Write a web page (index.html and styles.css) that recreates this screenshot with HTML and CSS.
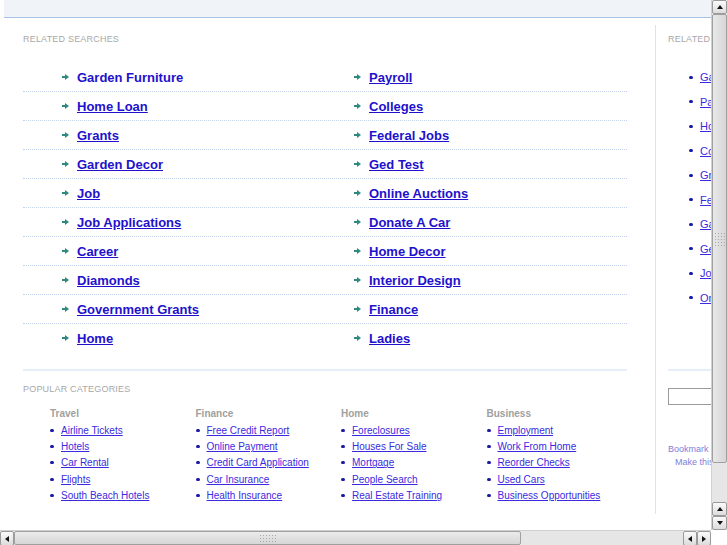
FILE: index.html
```html
<!DOCTYPE html>
<html lang="en">
<head>
    <meta charset="UTF-8">
    <title>Related Searches</title>
    <link rel="stylesheet" href="styles.css">
</head>
<body>
    <div class="window">
        <div class="viewport">
            <div class="page">
                <div class="topbar"></div>
                <div class="wrap">
                    <!-- Main column -->
                    <div class="main">
                        <h2 class="label">Related Searches</h2>
                        <div class="searches">
                            <div class="row">
                                <a class="first" href="#"><span class="arrow"></span>Garden Furniture</a>
                                <a href="#"><span class="arrow"></span>Payroll</a>
                            </div>
                            <div class="row">
                                <a href="#"><span class="arrow"></span>Home Loan</a>
                                <a href="#"><span class="arrow"></span>Colleges</a>
                            </div>
                            <div class="row">
                                <a href="#"><span class="arrow"></span>Grants</a>
                                <a href="#"><span class="arrow"></span>Federal Jobs</a>
                            </div>
                            <div class="row">
                                <a href="#"><span class="arrow"></span>Garden Decor</a>
                                <a href="#"><span class="arrow"></span>Ged Test</a>
                            </div>
                            <div class="row">
                                <a href="#"><span class="arrow"></span>Job</a>
                                <a href="#"><span class="arrow"></span>Online Auctions</a>
                            </div>
                            <div class="row">
                                <a href="#"><span class="arrow"></span>Job Applications</a>
                                <a href="#"><span class="arrow"></span>Donate A Car</a>
                            </div>
                            <div class="row">
                                <a href="#"><span class="arrow"></span>Career</a>
                                <a href="#"><span class="arrow"></span>Home Decor</a>
                            </div>
                            <div class="row">
                                <a href="#"><span class="arrow"></span>Diamonds</a>
                                <a href="#"><span class="arrow"></span>Interior Design</a>
                            </div>
                            <div class="row">
                                <a href="#"><span class="arrow"></span>Government Grants</a>
                                <a href="#"><span class="arrow"></span>Finance</a>
                            </div>
                            <div class="row">
                                <a href="#"><span class="arrow"></span>Home</a>
                                <a href="#"><span class="arrow"></span>Ladies</a>
                            </div>
                        </div>

                        <h2 class="label popular">Popular Categories</h2>
                        <div class="categories">
                            <div class="cat">
                                <h3>Travel</h3>
                                <ul>
                                    <li><a href="#">Airline Tickets</a></li>
                                    <li><a href="#">Hotels</a></li>
                                    <li><a href="#">Car Rental</a></li>
                                    <li><a href="#">Flights</a></li>
                                    <li><a href="#">South Beach Hotels</a></li>
                                </ul>
                            </div>
                            <div class="cat">
                                <h3>Finance</h3>
                                <ul>
                                    <li><a href="#">Free Credit Report</a></li>
                                    <li><a href="#">Online Payment</a></li>
                                    <li><a href="#">Credit Card Application</a></li>
                                    <li><a href="#">Car Insurance</a></li>
                                    <li><a href="#">Health Insurance</a></li>
                                </ul>
                            </div>
                            <div class="cat">
                                <h3>Home</h3>
                                <ul>
                                    <li><a href="#">Foreclosures</a></li>
                                    <li><a href="#">Houses For Sale</a></li>
                                    <li><a href="#">Mortgage</a></li>
                                    <li><a href="#">People Search</a></li>
                                    <li><a href="#">Real Estate Training</a></li>
                                </ul>
                            </div>
                            <div class="cat">
                                <h3>Business</h3>
                                <ul>
                                    <li><a href="#">Employment</a></li>
                                    <li><a href="#">Work From Home</a></li>
                                    <li><a href="#">Reorder Checks</a></li>
                                    <li><a href="#">Used Cars</a></li>
                                    <li><a href="#">Business Opportunities</a></li>
                                </ul>
                            </div>
                        </div>
                    </div>

                    <!-- Sidebar -->
                    <div class="side">
                        <h2 class="label">Related Searches</h2>
                        <ul class="side-links">
                            <li><a href="#">Garden Furniture</a></li>
                            <li><a href="#">Payroll</a></li>
                            <li><a href="#">Home Loan</a></li>
                            <li><a href="#">Colleges</a></li>
                            <li><a href="#">Grants</a></li>
                            <li><a href="#">Federal Jobs</a></li>
                            <li><a href="#">Garden Decor</a></li>
                            <li><a href="#">Ged Test</a></li>
                            <li><a href="#">Job</a></li>
                            <li><a href="#">Online Auctions</a></li>
                        </ul>
                        <div class="side-search">
                            <input type="text">
                        </div>
                        <div class="bookmark">
                            <a href="#">Bookmark this page</a>
                            <a class="home" href="#">Make this your homepage</a>
                        </div>
                    </div>
                </div>
            </div>
        </div>

        <!-- Browser scrollbars -->
        <div class="vscroll">
            <div class="sbtn up"></div>
            <div class="thumb-v"><span class="grip"></span></div>
            <div class="trough"></div>
            <div class="sbtn up"></div>
            <div class="sbtn down"></div>
        </div>
        <div class="hscroll">
            <div class="sbtn left"></div>
            <div class="thumb-h"><span class="grip"></span></div>
            <div class="trough"></div>
            <div class="sbtn left"></div>
            <div class="sbtn right"></div>
        </div>
        <div class="corner"></div>
    </div>
</body>
</html>
```

FILE: styles.css
```css
body {
    margin: 0;
    overflow: hidden;
    background: #fff;
    font-family: "Liberation Sans", Arial, sans-serif;
}
.window {
    display: grid;
    grid-template-columns: 711px 16px;
    grid-template-rows: 530px 15px;
    width: 727px;
    height: 545px;
}
.viewport {
    overflow: hidden;
}
.page {
    width: 900px;
}
.topbar {
    margin-left: 4px;
    height: 17px;
    background: #f0f4f8;
    border-bottom: 1px solid #a9c3e6;
}
.wrap {
    display: flex;
    padding-left: 23px;
    padding-top: 7px;
}
.main {
    width: 604px;
    padding-right: 28px;
    border-right: 1px solid #dbe3f1;
    padding-bottom: 10px;
}
.label {
    margin: 0;
    font-size: 9px;
    font-weight: normal;
    text-transform: uppercase;
    letter-spacing: 0.2px;
    color: #a8a8a8;
    line-height: 11px;
    padding-top: 9px;
}
.label.popular {
    padding-top: 13px;
}

/* Related searches */
.searches {
    margin-top: 18px;
    border-bottom: 2px solid #e6eef9;
    padding-bottom: 17px;
}
.row {
    display: grid;
    grid-template-columns: 292px 1fr;
    height: 28px;
    align-items: center;
    border-bottom: 1px dotted #c4d3ea;
}
.row:last-child {
    border-bottom: none;
}
.row a {
    display: flex;
    align-items: center;
    padding-left: 39px;
    font-size: 13px;
    font-weight: bold;
    color: #2211cc;
}
.row a.first {
    text-decoration: none;
}
.arrow {
    display: inline-block;
    width: 7px;
    height: 6px;
    margin-right: 8px;
    background: linear-gradient(#2e8a7f, #2e8a7f) 0 2px / 4px 2px no-repeat;
    position: relative;
}
.arrow::after {
    content: "";
    position: absolute;
    left: 3px;
    top: 0;
    border-left: 4px solid #2e8a7f;
    border-top: 3px solid transparent;
    border-bottom: 3px solid transparent;
}

/* Popular categories */
.categories {
    display: grid;
    grid-template-columns: repeat(4, 145.5px);
    padding-left: 27px;
    margin-top: 12px;
}
.cat h3 {
    margin: 0 0 2px;
    font-size: 10px;
    color: #a0a0a0;
    line-height: 13px;
}
.cat ul {
    list-style: none;
    margin: 0;
    padding: 0;
}
.cat li {
    display: flex;
    align-items: center;
    height: 16.4px;
    font-size: 10px;
}
.cat li::before, .side-links li::before {
    content: "";
    width: 4px;
    height: 3px;
    border-radius: 2px;
    background: #1a1aa8;
    margin-right: 7px;
    flex-shrink: 0;
}
.cat a {
    color: #3b2ae0;
}

/* Sidebar */
.side {
    width: 220px;
    padding-left: 12px;
}
.side-links {
    list-style: none;
    margin: 20px 0 0;
    padding: 0 0 0 21px;
    height: 304px;
    border-bottom: 2px solid #e6eef9;
}
.side-links li {
    display: flex;
    align-items: center;
    height: 24.5px;
    font-size: 11px;
}
.side-links a {
    color: #3b2ae0;
}
.side-search {
    margin-top: 17px;
}
.side-search input {
    display: block;
    width: 150px;
    height: 15px;
    padding: 0;
    border: 1px solid #9a9a9a;
    font-size: 11px;
}
.bookmark {
    margin-top: 38px;
    font-size: 9px;
    line-height: 13px;
}
.bookmark a {
    display: block;
    color: #8080dc;
    text-decoration: none;
}
.bookmark a.home {
    padding-left: 7px;
}

/* Scrollbars */
.vscroll {
    display: flex;
    flex-direction: column;
    background: #ececec;
    border-left: 1px solid #d0d0d0;
}
.hscroll {
    display: flex;
    background: #ececec;
    border-top: 1px solid #d0d0d0;
}
.trough {
    flex: 1;
    background-image: radial-gradient(#dedede 0.6px, transparent 0.8px);
    background-size: 2px 2px;
}
.corner {
    background: #fff;
}
.sbtn {
    width: 14px;
    height: 14px;
    flex-shrink: 0;
    background: linear-gradient(#fafafa, #dcdcdc);
    border: 1px solid #9a9a9a;
    border-radius: 2px;
    box-sizing: border-box;
    display: flex;
    align-items: center;
    justify-content: center;
}
.vscroll .sbtn {
    width: 15px;
}
.hscroll .sbtn {
    height: 15px;
}
.sbtn::after {
    content: "";
    border: 3px solid transparent;
}
.sbtn.up::after {
    border-bottom: 4px solid #111;
    border-top: none;
}
.sbtn.down::after {
    border-top: 4px solid #111;
    border-bottom: none;
}
.sbtn.left::after {
    border-right: 4px solid #111;
    border-left: none;
}
.sbtn.right::after {
    border-left: 4px solid #111;
    border-right: none;
}
.thumb-v {
    height: 447px;
    background: linear-gradient(90deg, #e8e8e8, #d6d6d6);
    border: 1px solid #a0a0a0;
    border-radius: 2px;
    display: flex;
    align-items: center;
    justify-content: center;
}
.thumb-h {
    width: 505px;
    background: linear-gradient(#ececec, #d6d6d6);
    border: 1px solid #a0a0a0;
    border-radius: 2px;
    display: flex;
    align-items: center;
    justify-content: center;
}
.grip {
    display: block;
    width: 11px;
    height: 14px;
    background-image: radial-gradient(#a8a8a8 0.7px, transparent 0.9px);
    background-size: 3px 3px;
}
.thumb-h .grip {
    width: 17px;
    height: 9px;
}
```
